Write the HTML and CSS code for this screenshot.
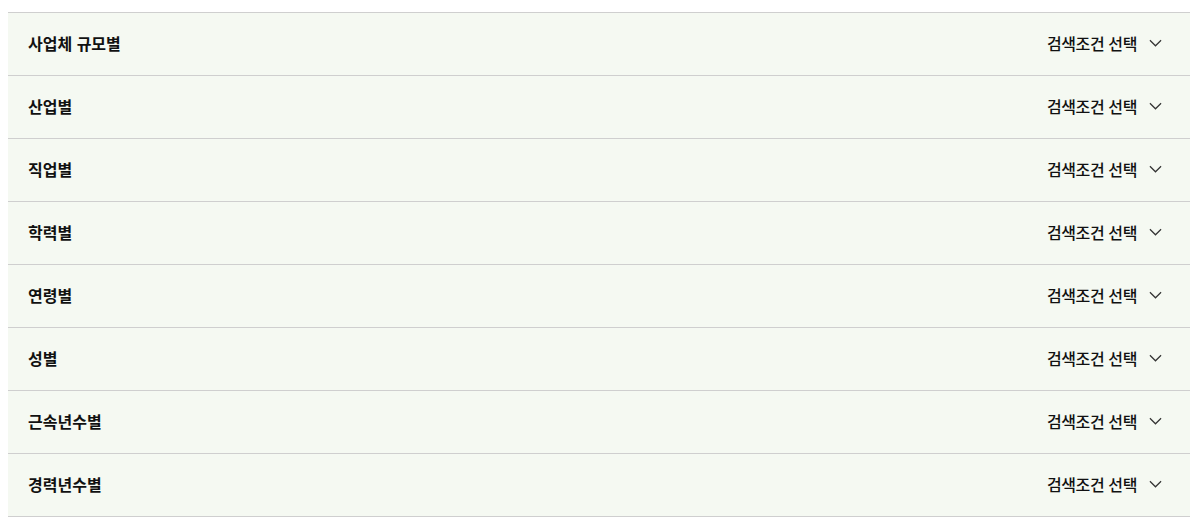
FILE: index.html
```html
<!DOCTYPE html>
<html lang="ko">
<head>
<meta charset="utf-8">
<link rel="stylesheet" href="styles.css">
</head>
<body>
<ul class="filters">
  <li class="row"><span class="label">사업체 규모별</span><span class="select">검색조건 선택<svg class="chev" viewBox="0 0 14 8" width="13" height="8"><path d="M1 1l6 6 6-6" fill="none" stroke="#333" stroke-width="1.3"/></svg></span></li>
  <li class="row"><span class="label">산업별</span><span class="select">검색조건 선택<svg class="chev" viewBox="0 0 14 8" width="13" height="8"><path d="M1 1l6 6 6-6" fill="none" stroke="#333" stroke-width="1.3"/></svg></span></li>
  <li class="row"><span class="label">직업별</span><span class="select">검색조건 선택<svg class="chev" viewBox="0 0 14 8" width="13" height="8"><path d="M1 1l6 6 6-6" fill="none" stroke="#333" stroke-width="1.3"/></svg></span></li>
  <li class="row"><span class="label">학력별</span><span class="select">검색조건 선택<svg class="chev" viewBox="0 0 14 8" width="13" height="8"><path d="M1 1l6 6 6-6" fill="none" stroke="#333" stroke-width="1.3"/></svg></span></li>
  <li class="row"><span class="label">연령별</span><span class="select">검색조건 선택<svg class="chev" viewBox="0 0 14 8" width="13" height="8"><path d="M1 1l6 6 6-6" fill="none" stroke="#333" stroke-width="1.3"/></svg></span></li>
  <li class="row"><span class="label">성별</span><span class="select">검색조건 선택<svg class="chev" viewBox="0 0 14 8" width="13" height="8"><path d="M1 1l6 6 6-6" fill="none" stroke="#333" stroke-width="1.3"/></svg></span></li>
  <li class="row"><span class="label">근속년수별</span><span class="select">검색조건 선택<svg class="chev" viewBox="0 0 14 8" width="13" height="8"><path d="M1 1l6 6 6-6" fill="none" stroke="#333" stroke-width="1.3"/></svg></span></li>
  <li class="row"><span class="label">경력년수별</span><span class="select">검색조건 선택<svg class="chev" viewBox="0 0 14 8" width="13" height="8"><path d="M1 1l6 6 6-6" fill="none" stroke="#333" stroke-width="1.3"/></svg></span></li>
</ul>
</body>
</html>
```
FILE: styles.css
```css
html, body { margin: 0; padding: 0; background: #fff; }
body { padding: 8px; font-family: "Noto Sans CJK KR", "Noto Sans", sans-serif; color: #111; }
.filters { list-style: none; margin: 4px 0 0; padding: 0; border-top: 1px solid #cfcfcf; }
.row {
  display: flex; align-items: center; justify-content: space-between;
  box-sizing: border-box; height: 63px; padding: 0 28px 3px 20px;
  background: #f5f9f2; border-bottom: 1px solid #cfcfcf;
}
.label { font-size: 16px; font-weight: 700; line-height: 20px; }
.select { display: flex; align-items: center; gap: 12px; font-size: 16px; font-weight: 500; line-height: 20px; letter-spacing: -0.4px; }
.chev { display: block; }
```
